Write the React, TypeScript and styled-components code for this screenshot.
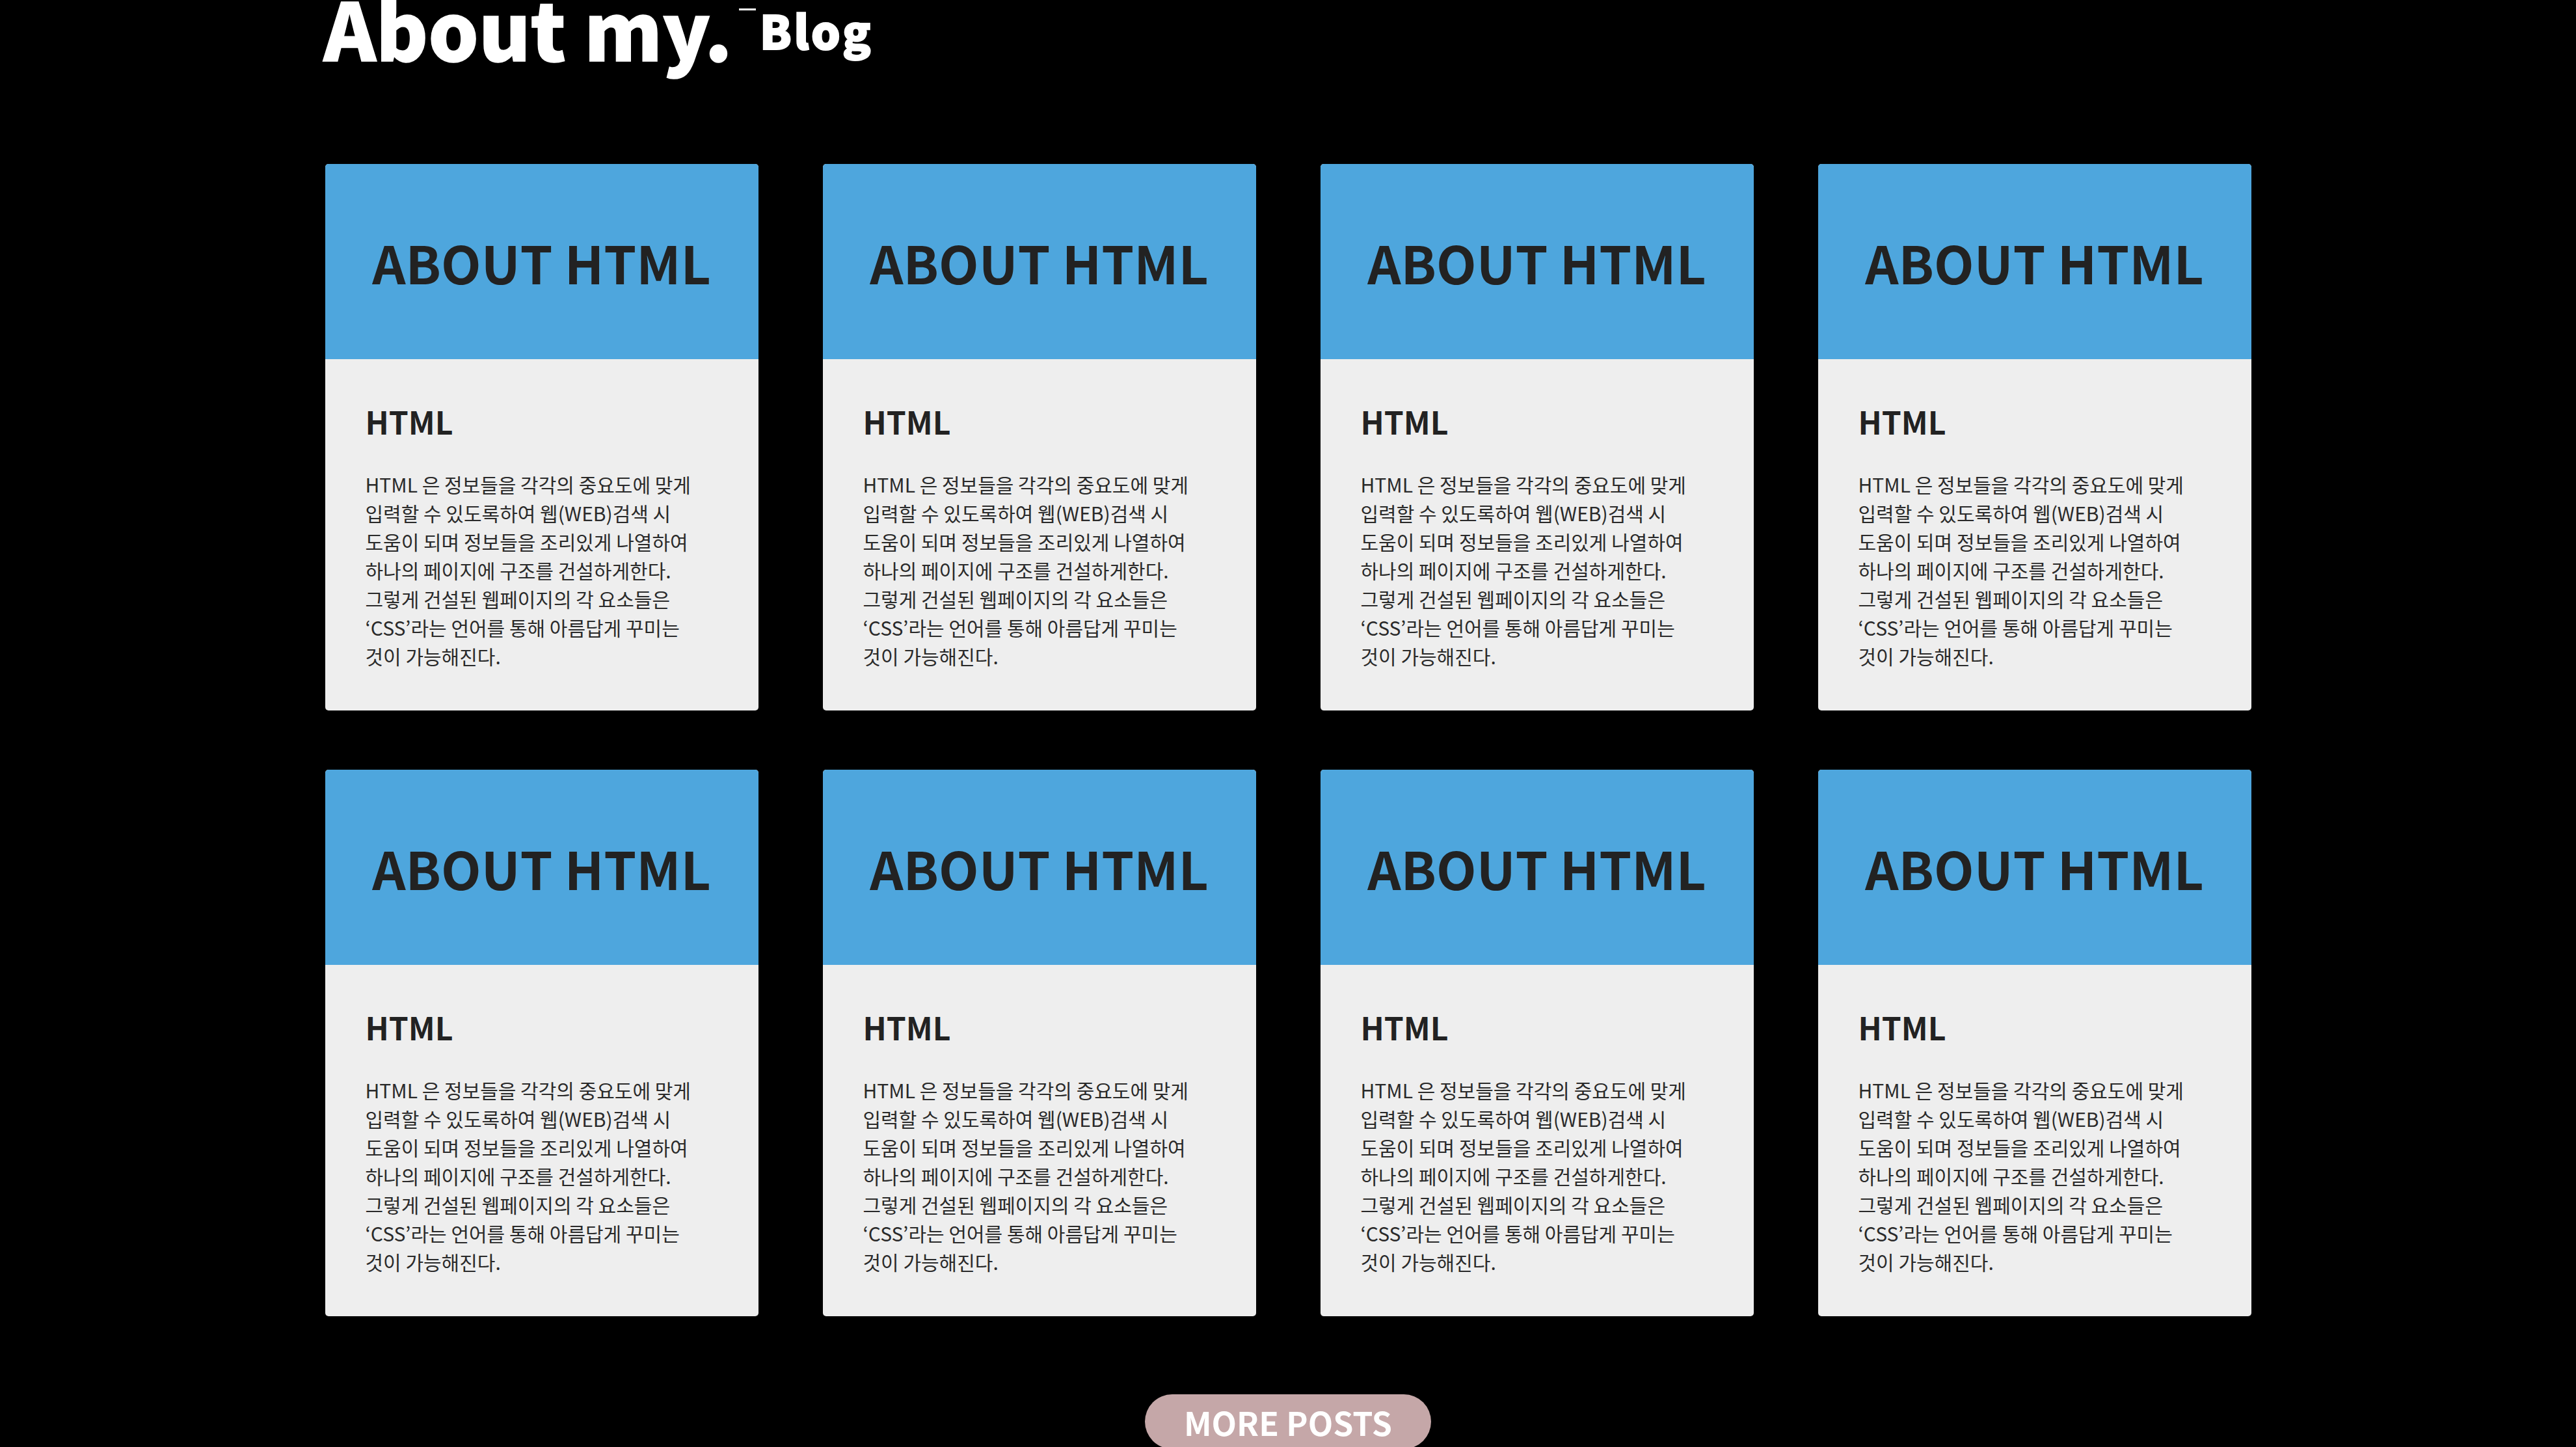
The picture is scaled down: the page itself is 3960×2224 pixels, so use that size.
import React from "react";
import styled, { createGlobalStyle } from "styled-components";

const GlobalStyle = createGlobalStyle`
  html, body {
    margin: 0;
    padding: 0;
    background: #000;
  }
  body {
    font-family: "Noto Sans CJK KR", "Noto Sans", sans-serif;
    color: #222;
    overflow: hidden;
  }
  * { box-sizing: border-box; }
`;

const Page = styled.main`
  width: 2961px;
  margin: 0 auto;
  display: flex;
  flex-direction: column;
`;

const Title = styled.h1`
  margin: -20px 0 0 -2px;
  font-size: 122px;
  line-height: 1;
  font-weight: 900;
  color: #fff;
  white-space: nowrap;
  -webkit-text-stroke: 1.5px #fff;
`;

const Dash = styled.span`
  display: inline-block;
  width: 26px;
  height: 3px;
  margin-left: 10px;
  background: #fff;
  vertical-align: 78px;
`;

const Sub = styled.span`
  display: inline-block;
  margin-left: 6px;
  font-size: 71px;
  line-height: 1;
  letter-spacing: 3px;
  vertical-align: 18px;
  -webkit-text-stroke: 2px #fff;
`;

const Grid = styled.section`
  margin-top: 150px;
  display: grid;
  grid-template-columns: repeat(4, 666px);
  column-gap: 99px;
  row-gap: 91px;
`;

const Card = styled.article`
  background: #eee;
  border-radius: 5px;
  overflow: hidden;
  display: flex;
  flex-direction: column;
`;

const CardHead = styled.header`
  height: 300px;
  background: #4ea6dd;
  display: flex;
  align-items: center;
  justify-content: center;
`;

const HeadTitle = styled.h2`
  margin: 0;
  font-size: 80px;
  line-height: 1;
  font-weight: 700;
  color: #222;
`;

const CardBody = styled.div`
  padding: 65px 62px 62px;
`;

const BodyTitle = styled.h3`
  margin: 0;
  font-size: 48px;
  line-height: 1.25;
  font-weight: 700;
  color: #222;
`;

const BodyText = styled.p`
  margin: 45px 0 0;
  font-size: 30px;
  line-height: 44px;
  font-weight: 400;
  color: #2a2a2a;
  word-break: keep-all;
`;

const MoreWrap = styled.div`
  margin-top: 120px;
  display: flex;
  justify-content: center;
`;

const MoreButton = styled.button`
  width: 440px;
  height: 84px;
  border: none;
  border-radius: 42px;
  background: #c5a7a8;
  color: #fff;
  font-family: "Noto Sans CJK KR", "Noto Sans", sans-serif;
  font-size: 50px;
  font-weight: 700;
  line-height: 1;
  display: flex;
  align-items: center;
  justify-content: center;
  padding: 0;
  cursor: pointer;
`;

const text =
  "HTML 은 정보들을 각각의 중요도에 맞게 입력할 수 있도록하여 웹(WEB)검색 시 도움이 되며 정보들을 조리있게 나열하여 하나의 페이지에 구조를 건설하게한다. 그렇게 건설된 웹페이지의 각 요소들은 ‘CSS’라는 언어를 통해 아름답게 꾸미는 것이 가능해진다.";

const posts = Array.from({ length: 8 }, (_, i) => ({
  id: i,
  head: "ABOUT HTML",
  title: "HTML",
  body: text,
}));

export default function App() {
  return (
    <>
      <GlobalStyle />
      <Page>
        <Title>
          About my.
          <Dash />
          <Sub>Blog</Sub>
        </Title>
        <Grid>
          {posts.map((p) => (
            <Card key={p.id}>
              <CardHead>
                <HeadTitle>{p.head}</HeadTitle>
              </CardHead>
              <CardBody>
                <BodyTitle>{p.title}</BodyTitle>
                <BodyText>{p.body}</BodyText>
              </CardBody>
            </Card>
          ))}
        </Grid>
        <MoreWrap>
          <MoreButton>MORE POSTS</MoreButton>
        </MoreWrap>
      </Page>
    </>
  );
}
